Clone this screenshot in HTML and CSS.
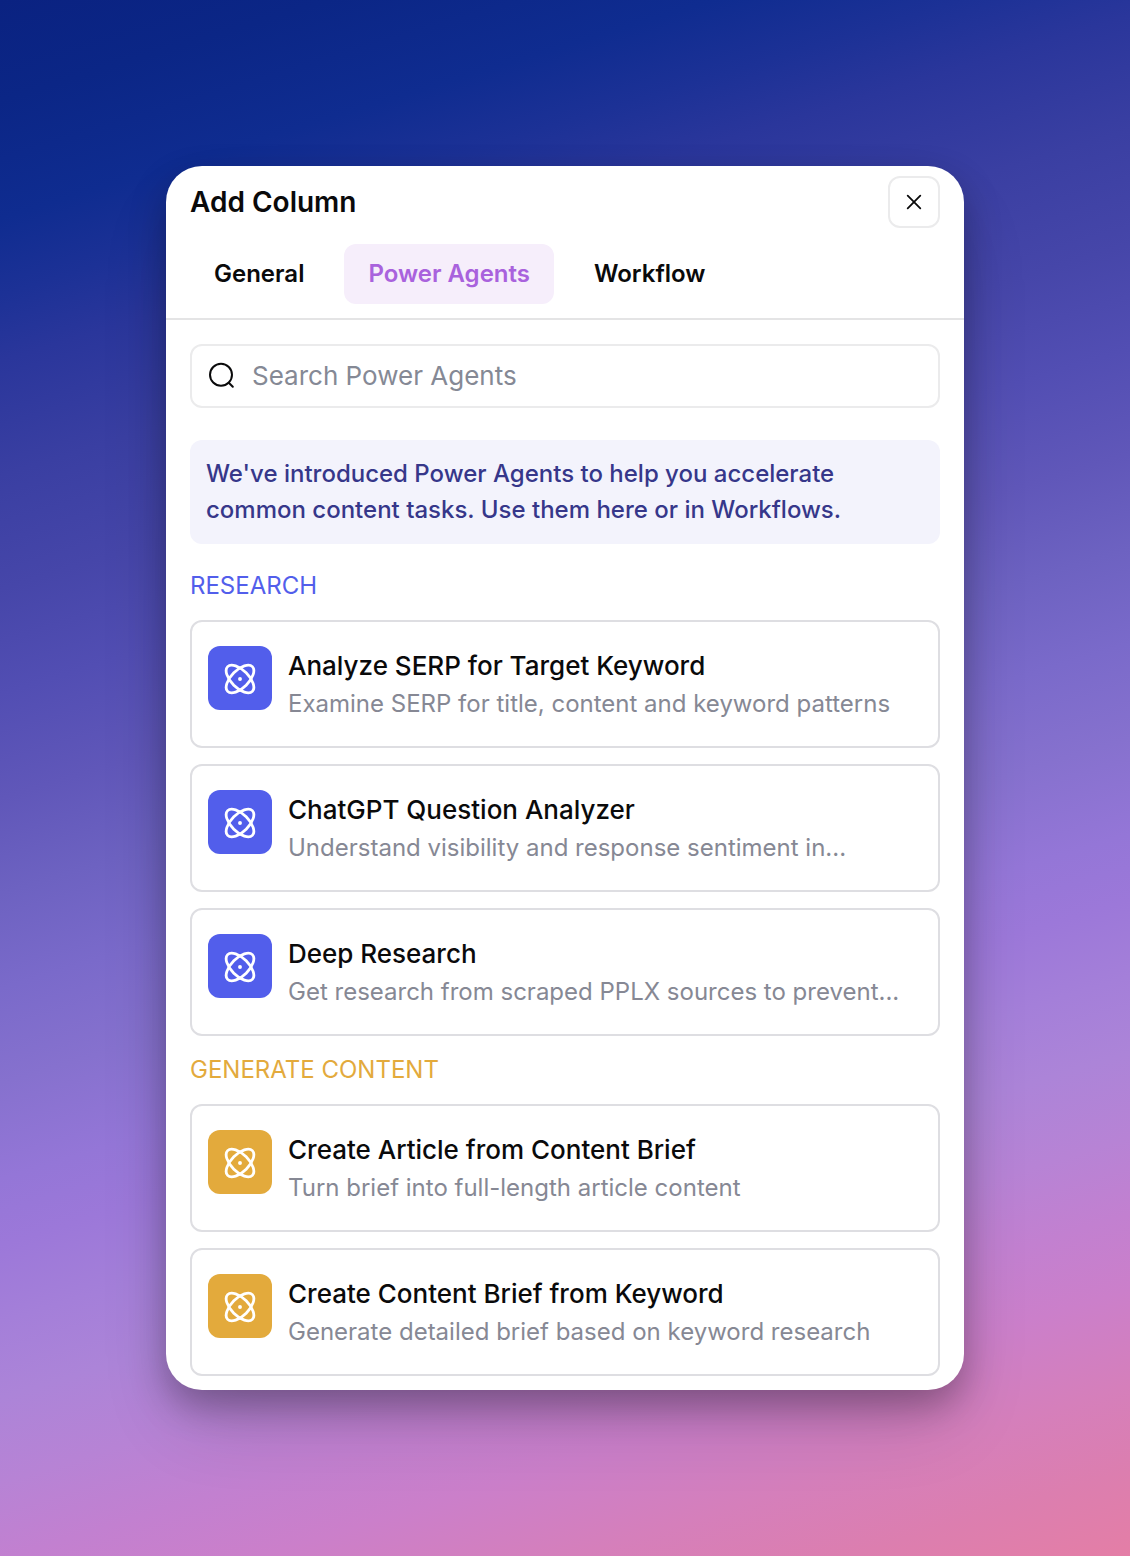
FILE: index.html
```html
<!DOCTYPE html>
<html lang="en">
<head>
<meta charset="utf-8">
<title>Add Column</title>
<link rel="stylesheet" href="styles.css">
</head>
<body>
<svg class="sprite" aria-hidden="true">
  <symbol id="atom" viewBox="0 0 24 24">
    <path d="M15.5356 15.5355C11.6304 19.4408 6.88172 21.0238 4.92909 19.0711C2.97647 17.1184 4.55938 12.3698 8.46462 8.46454C12.3699 4.5593 17.1185 2.97639 19.0711 4.92901C21.0238 6.88163 19.4409 11.6303 15.5356 15.5355Z"/>
    <path d="M15.5355 8.46449C19.4408 12.3697 21.0237 17.1184 19.0711 19.071C17.1184 21.0236 12.3698 19.4407 8.46455 15.5355C4.5593 11.6302 2.97639 6.8816 4.92901 4.92898C6.88163 2.97635 11.6303 4.55927 15.5355 8.46449Z"/>
    <path class="nucleus" d="M12 12h.01"/>
  </symbol>
</svg>
<main class="modal">
  <header class="header">
    <div class="title-row">
      <h1 class="title">Add Column</h1>
      <button class="close" aria-label="Close"><svg viewBox="0 0 16 16" width="16" height="16"><path d="M1.7 1.7l12.6 12.6M14.3 1.7L1.7 14.3"/></svg></button>
    </div>
    <nav class="tabs">
      <a class="tab">General</a>
      <a class="tab active">Power Agents</a>
      <a class="tab">Workflow</a>
    </nav>
  </header>
  <section class="content">
    <div class="search">
      <svg width="28" height="28" viewBox="0 0 28 28"><circle cx="13" cy="12.8" r="11"/><path d="M20.8 20.8L24.8 24.8"/></svg>
      <span>Search Power Agents</span>
    </div>
    <p class="notice">We've introduced Power Agents to help you accelerate<br>common content tasks. Use them here or in Workflows.</p>
    <section class="group research">
      <h2 class="group-title">RESEARCH</h2>
      <article class="card"><span class="tile"><svg><use href="#atom"/></svg></span><div class="info"><h3>Analyze SERP for Target Keyword</h3><p>Examine SERP for title, content and keyword patterns</p></div></article>
      <article class="card"><span class="tile"><svg><use href="#atom"/></svg></span><div class="info"><h3>ChatGPT Question Analyzer</h3><p>Understand visibility and response sentiment in...</p></div></article>
      <article class="card"><span class="tile"><svg><use href="#atom"/></svg></span><div class="info"><h3>Deep Research</h3><p>Get research from scraped PPLX sources to prevent...</p></div></article>
    </section>
    <section class="group generate">
      <h2 class="group-title">GENERATE CONTENT</h2>
      <article class="card"><span class="tile"><svg><use href="#atom"/></svg></span><div class="info"><h3>Create Article from Content Brief</h3><p>Turn brief into full-length article content</p></div></article>
      <article class="card"><span class="tile"><svg><use href="#atom"/></svg></span><div class="info"><h3>Create Content Brief from Keyword</h3><p>Generate detailed brief based on keyword research</p></div></article>
    </section>
  </section>
</main>
</body>
</html>
```
FILE: styles.css
```css
* { box-sizing: border-box; margin: 0; }
body {
  width: 1130px;
  height: 1556px;
  display: flex;
  justify-content: center;
  align-items: flex-start;
  padding-top: 166px;
  overflow: hidden;
  font-family: Inter, "Liberation Sans", sans-serif;
  color: #0a0a0b;
  background: linear-gradient(163deg,
    #0a2281 0%, #0b2686 5.3%, #0f2c90 11.5%, #1c3196 15.5%, #2a369b 19%,
    #3a3fa2 25%, #4646a9 31%, #524eb3 36.5%, #6057b9 42%, #6d62c1 47%,
    #7a6aca 52%, #8671ce 57%, #9476d7 62%, #9c78d9 65.5%, #a47fd9 69.5%,
    #ac84d8 73.5%, #b783d5 78%, #c280d0 82%, #cb7fca 86%, #d57fbb 91%, #dc7eaf 95.5%, #e47ea6 100%);
}
.sprite { position: absolute; width: 0; height: 0; }
svg { display: block; fill: none; stroke: currentColor; stroke-linecap: round; stroke-linejoin: round; }
.modal {
  width: 798px;
  height: 1224px;
  overflow: hidden;
  border-radius: 36px;
  background: #fff;
  box-shadow: 0 16px 36px rgba(0, 0, 0, .28), 0 40px 80px -14px rgba(0, 0, 0, .16);
}
.header { height: 154px; border-bottom: 2px solid #e4e4e5; }
.title-row { display: flex; justify-content: space-between; align-items: center; padding: 10px 24px 0; }
.title { font-size: 28px; line-height: 40px; font-weight: 600; }
.close {
  display: grid;
  place-items: center;
  width: 52px;
  height: 52px;
  padding: 0;
  border: 2px solid #ebebec;
  border-radius: 12px;
  background: #fff;
  color: #0a0a0b;
}
.close svg { stroke-width: 1.8; }
.tabs { display: flex; gap: 16px; padding: 16px 24px 0; }
.tab { height: 60px; padding: 0 24px; border-radius: 12px; font-size: 24px; line-height: 60px; font-weight: 600; }
.active { background: #f6eefb; color: #a962dd; }
.content { padding: 24px 24px 0; }
.search {
  display: flex;
  align-items: center;
  gap: 16px;
  height: 64px;
  padding: 0 16px;
  border: 2px solid #ebebec;
  border-radius: 12px;
  font-size: 26px;
  line-height: 40px;
  color: #858995;
}
.search span { padding-bottom: 1px; }
.search svg { color: #0a0a0b; stroke-width: 2; }
.notice {
  height: 104px;
  margin-top: 32px;
  padding: 16px;
  border-radius: 12px;
  background: #f3f3fc;
  color: #36378a;
  font-size: 24px;
  line-height: 36px;
  font-weight: 500;
}
.group { display: flex; flex-direction: column; gap: 16px; }
.research { margin-top: 24px; --accent: #525eeb; }
.generate { margin-top: 16px; --accent: #e3aa3c; }
.group-title { height: 36px; color: var(--accent); font-size: 24px; line-height: 36px; font-weight: 400; }
.card { display: flex; gap: 16px; height: 128px; padding: 24px 16px; border: 2px solid #dedee2; border-radius: 12px; }
.tile { display: grid; place-items: center; width: 64px; height: 64px; padding: 2px 1px 0 0; border-radius: 12px; background: var(--accent); color: #fff; }
.tile svg { width: 42px; height: 42px; stroke-width: 1.6; }
.nucleus { stroke-width: 2.2; }
.info h3 { font-size: 26px; line-height: 40px; font-weight: 500; }
.info p { color: #868894; font-size: 24px; line-height: 36px; }
```
